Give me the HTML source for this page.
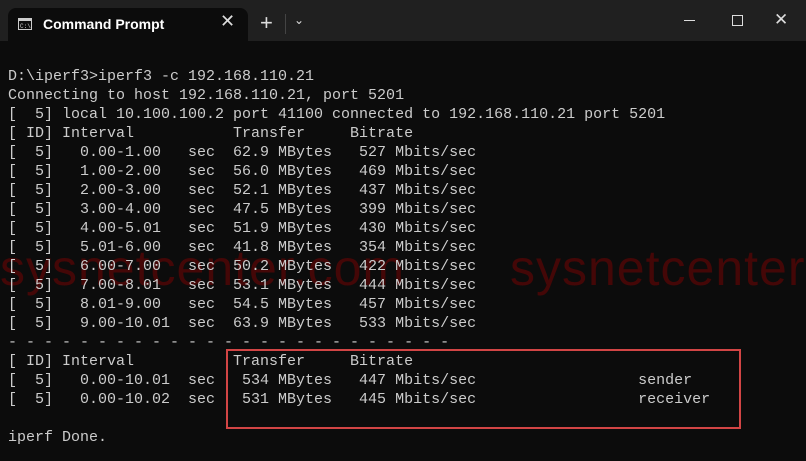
<!DOCTYPE html><html><head><style>
body{margin:0;width:806px;height:461px;background:#0c0c0c;overflow:hidden;position:relative;font-family:"Liberation Sans",sans-serif}
.tb{position:absolute;left:0;top:0;width:806px;height:41px;background:#202020}
.tab{position:absolute;left:8px;top:8px;width:240px;height:33px;background:#0c0c0c;border-radius:8px 8px 0 0}
.tt{position:absolute;left:43px;top:16px;color:#fff;font-size:14px;font-weight:bold}
pre{position:absolute;left:8px;top:67px;margin:0;font-family:"Liberation Mono",monospace;font-size:15px;line-height:19px;color:#cccccc}
.wm{position:absolute;top:239px;font-family:"Liberation Sans",sans-serif;font-size:50px;color:#440707;letter-spacing:1px}
.box{position:absolute;left:226px;top:349px;width:511px;height:76px;border:2px solid #d24545}
</style></head><body>
<div class="tb"></div>
<div class="tab"></div>
<svg style="position:absolute;left:18px;top:18px" width="14" height="12"><rect x="0.5" y="0.5" width="13" height="11" fill="none" stroke="#ccc"/><rect x="1" y="1" width="12" height="2" fill="#ccc"/><text x="2" y="10" font-size="6" fill="#ccc" font-family="Liberation Mono">C:\</text></svg>
<div class="tt">Command Prompt</div>
<div style="position:absolute;left:220px;top:11px;color:#ddd;font-size:18px">✕</div>
<div style="position:absolute;left:260px;top:10px;color:#ddd;font-size:22px">+</div>
<div style="position:absolute;left:285px;top:14px;width:1px;height:20px;background:#444"></div>
<div style="position:absolute;left:294px;top:13px;color:#ddd;font-size:12px">⌄</div>
<div style="position:absolute;left:684px;top:20px;width:11px;height:1px;background:#ddd"></div>
<div style="position:absolute;left:732px;top:15px;width:9px;height:9px;border:1px solid #ddd"></div>
<div style="position:absolute;left:774px;top:10px;color:#ddd;font-size:17px">✕</div>
<div class="wm" style="left:0">sysnetcenter.com</div>
<div class="wm" style="left:510px">sysnetcenter</div>
<pre>D:\iperf3&gt;iperf3 -c 192.168.110.21
Connecting to host 192.168.110.21, port 5201
[  5] local 10.100.100.2 port 41100 connected to 192.168.110.21 port 5201
[ ID] Interval           Transfer     Bitrate
[  5]   0.00-1.00   sec  62.9 MBytes   527 Mbits/sec
[  5]   1.00-2.00   sec  56.0 MBytes   469 Mbits/sec
[  5]   2.00-3.00   sec  52.1 MBytes   437 Mbits/sec
[  5]   3.00-4.00   sec  47.5 MBytes   399 Mbits/sec
[  5]   4.00-5.01   sec  51.9 MBytes   430 Mbits/sec
[  5]   5.01-6.00   sec  41.8 MBytes   354 Mbits/sec
[  5]   6.00-7.00   sec  50.2 MBytes   422 Mbits/sec
[  5]   7.00-8.01   sec  53.1 MBytes   444 Mbits/sec
[  5]   8.01-9.00   sec  54.5 MBytes   457 Mbits/sec
[  5]   9.00-10.01  sec  63.9 MBytes   533 Mbits/sec
- - - - - - - - - - - - - - - - - - - - - - - - -
[ ID] Interval           Transfer     Bitrate
[  5]   0.00-10.01  sec   534 MBytes   447 Mbits/sec                  sender
[  5]   0.00-10.02  sec   531 MBytes   445 Mbits/sec                  receiver

iperf Done.</pre>
<div class="box"></div>
</body></html>
